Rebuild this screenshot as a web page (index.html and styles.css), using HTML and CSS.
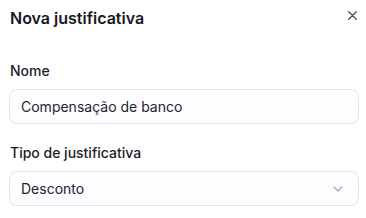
FILE: index.html
```html
<!DOCTYPE html>
<html lang="pt-BR">
  <head>
    <meta charset="UTF-8" />
    <meta name="viewport" content="width=device-width, initial-scale=1.0" />
    <title>Nova justificativa</title>
    <link rel="stylesheet" href="styles.css">
  </head>
  <body>
    <div class="dialog">
      <div class="dialog__header">
        <h2 class="dialog__title">Nova justificativa</h2>
        <button class="dialog__close" type="button" aria-label="Fechar">
          <svg width="9" height="9" viewBox="0 0 9 9">
            <path d="M0.7 0.7 L8.3 8.3 M8.3 0.7 L0.7 8.3" stroke="#4b4f5c" stroke-width="1.3" stroke-linecap="round" fill="none" />
          </svg>
        </button>
      </div>

      <form class="dialog__form">
        <div class="field">
          <label class="field__label" for="nome">Nome</label>
          <input class="field__input" id="nome" type="text" value="Compensação de banco" />
        </div>
        <div class="field">
          <label class="field__label" for="tipo">Tipo de justificativa</label>
          <div class="field__select">
            <span>Desconto</span>
            <svg width="10" height="6" viewBox="0 0 10 6">
              <path d="M1 1 L5 5 L9 1" stroke="#a3a8b8" stroke-width="1.2" stroke-linecap="round" stroke-linejoin="round" fill="none" />
            </svg>
          </div>
        </div>
      </form>
    </div>
  </body>
</html>
```

FILE: styles.css
```css
body {
  margin: 0;
  background: #ffffff;
  font-family: Inter, "Noto Sans", sans-serif;
  color: #1b1d29;
}
.dialog {
  padding: 8px 7px 0 9px;
}
/* header */
.dialog__header {
  display: flex;
  align-items: center;
  justify-content: space-between;
  height: 20px;
}
.dialog__title {
  margin: 0 0 0 1px;
  font-size: 16px;
  font-weight: 600;
  line-height: 20px;
  color: #161824;
}
.dialog__close {
  border: 0;
  background: none;
  padding: 0;
  width: 9px;
  height: 9px;
  margin-right: 2px;
  margin-top: -6px;
  display: flex;
  align-items: center;
  justify-content: center;
  cursor: pointer;
}
/* form */
.dialog__form {
  margin-top: 33px;
  display: flex;
  flex-direction: column;
  gap: 19px;
}
.field {
  display: flex;
  flex-direction: column;
  gap: 8px;
}
.field__label {
  margin-left: 1px;
  font-size: 14px;
  font-weight: 500;
  line-height: 20px;
  color: #1b1d29;
}
.field__input,
.field__select {
  box-sizing: border-box;
  width: 350px;
  height: 35px;
  border: 1px solid #e3e5ef;
  border-radius: 8px;
  background: #fdfdff;
  padding: 0 11px;
  font-family: inherit;
  font-size: 14px;
  color: #22242f;
  box-shadow: 0 1px 1px rgba(20, 30, 80, 0.03);
}
.field__input {
  outline: none;
}
.field__select {
  display: flex;
  align-items: center;
  justify-content: space-between;
  padding-right: 15px;
}
```
